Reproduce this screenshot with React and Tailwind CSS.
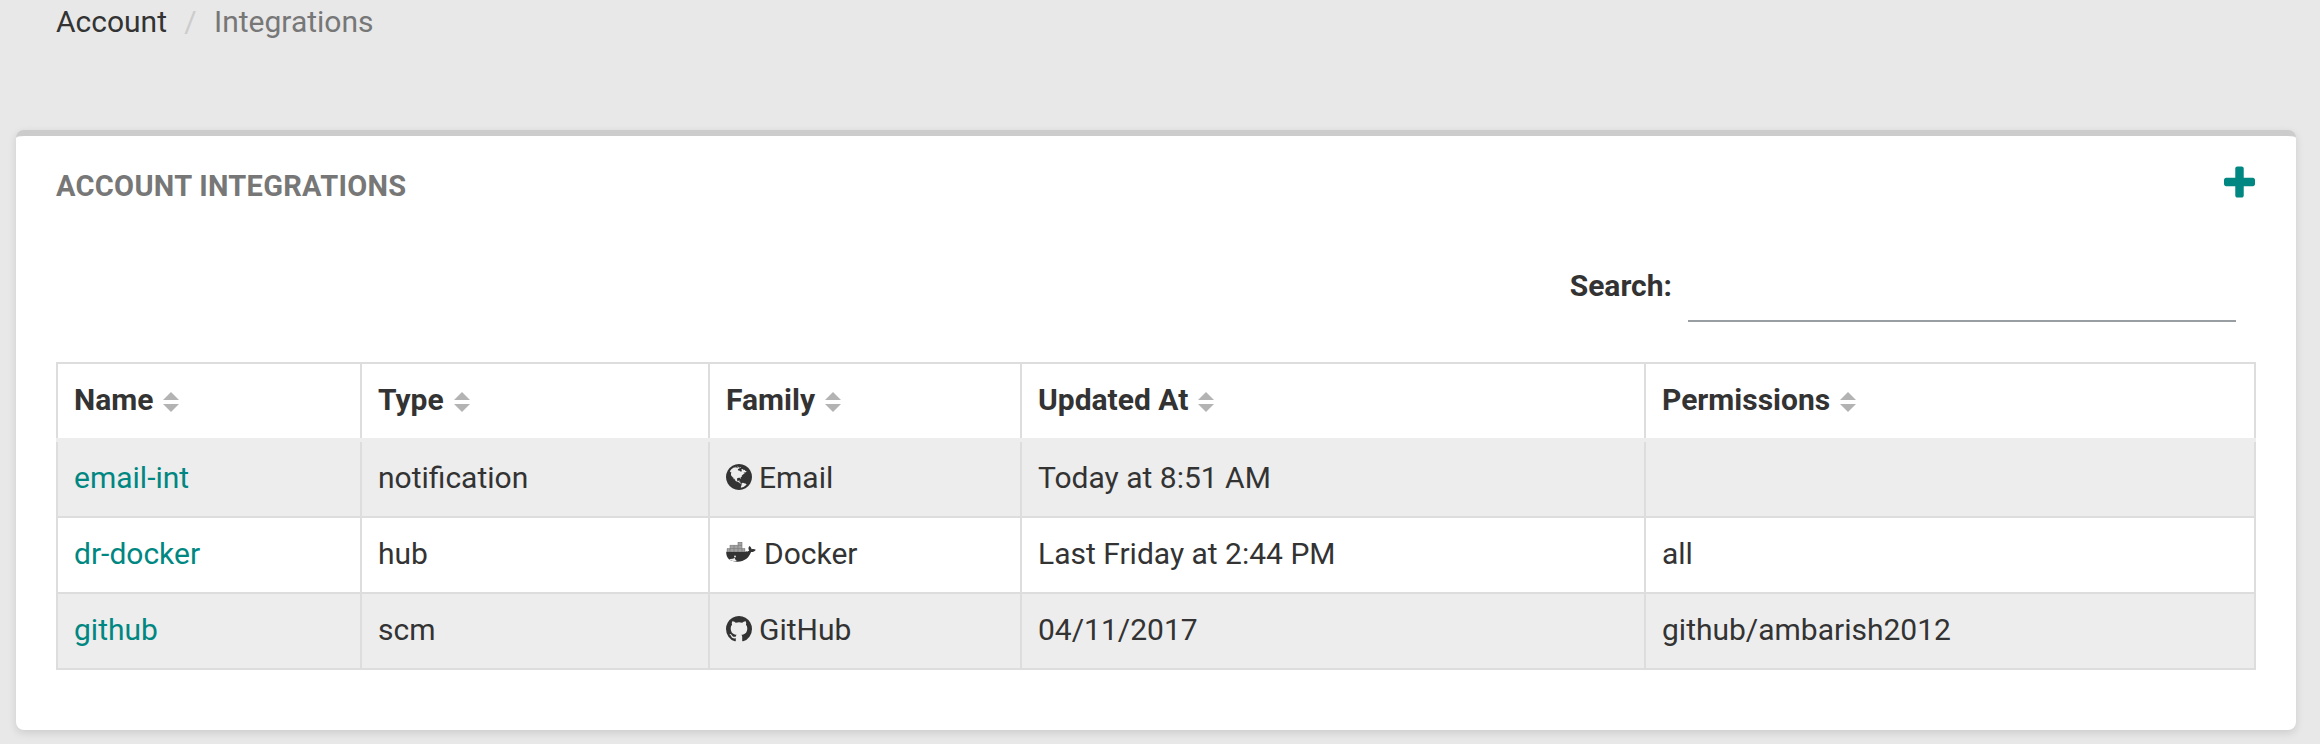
const columns = [
  { key: "name", label: "Name", width: "w-[304px]" },
  { key: "type", label: "Type", width: "w-[348px]" },
  { key: "family", label: "Family", width: "w-[312px]" },
  { key: "updated", label: "Updated At", width: "w-[624px]" },
  { key: "permissions", label: "Permissions", width: "w-[612px] border-r-2" },
];

const rows = [
  { name: "email-int", type: "notification", family: "Email", icon: GlobeIcon, updated: "Today at 8:51 AM", permissions: "" },
  { name: "dr-docker", type: "hub", family: "Docker", icon: DockerIcon, updated: "Last Friday at 2:44 PM", permissions: "all" },
  { name: "github", type: "scm", family: "GitHub", icon: GithubIcon, updated: "04/11/2017", permissions: "github/ambarish2012" },
];

function PlusIcon() {
  return (
    <svg className="h-8 w-[31px]" viewBox="192 128 1408 1408" fill="currentColor" aria-hidden="true">
      <path d="M1600 736v192q0 40-28 68t-68 28h-416v416q0 40-28 68t-68 28h-192q-40 0-68-28t-28-68v-416h-416q-40 0-68-28t-28-68v-192q0-40 28-68t68-28h416v-416q0-40 28-68t68-28h192q40 0 68 28t28 68v416h416q40 0 68 28t28 68z" />
    </svg>
  );
}

function SortIcon() {
  return (
    <svg className="mt-[5px] h-5 w-4" viewBox="0 0 16 20" fill="#b3b3b3" aria-hidden="true">
      <path d="M8 0 16 8H0zM0 12h16l-8 8z" />
    </svg>
  );
}

function GlobeIcon() {
  return (
    <svg className="mr-[7px] mb-px h-[26px] w-[26px]" viewBox="128 128 1536 1536" fill="currentColor" aria-hidden="true">
      <path d="M896 128q209 0 385.5 103t279.5 279.5 103 385.5-103 385.5-279.5 279.5-385.5 103-385.5-103-279.5-279.5-103-385.5 103-385.5 279.5-279.5 385.5-103zm274 521q-2 1-9.5 9.5t-13.5 9.5q2 0 4.5-5t5-11 3.5-7q6-7 22-15 14-6 52-12 34-8 51 11-2-2 9.5-13t14.5-12q3-2 15-4.5t15-7.5l2-22q-12 1-17.5-7t-6.5-21q0 2-6 8 0-7-4.5-8t-11.5 1-9 1q-10-3-15-7.5t-8-16.5-4-15q-2-5-9.5-10.5t-9.5-10.5q-1-2-2.5-5.5t-3-6.5-4-5.500-5.500-2.500-7 5-7.500 10-4.500 5q-3-2-6-1.500t-4.500 1-4.500 3-5 3.500q-3 2-8.500 3t-8.500 2q15-5-1-11-10-4-16-3 9-4 7.500-12t-8.500-14h5q-1-4-8.500-8.500t-17.500-8.500-13-6q-8-5-34-9.500t-33-.5q-5 6-4.500 10.500t4 14 3.500 12.500q1 6-5.500 13t-6.500 12q0 7 14 15.500t10 21.500q-3 8-16 16t-16 12q-5 8-1.500 18.500t10.500 16.500q2 2 1.500 4t-3.500 4.500-5.500 4-6.500 3.500l-3 2q-11 5-20.500-6t-13.500-26q-7-25-16-30-23-8-29 1-5-13-41-26-25-9-58-4 6-1 0-15-7-15-19-12 3-6 4-17.500t1-13.500q3-13 12-23 1-1 7-8.500t9.500-13.500.5-6q35 4 50-11 5-5 11.500-17t10.500-17q9-6 14-5.500t14.500 5.500 14.500 5q14 1 15.500-11t-7.500-20q12 1 3-17-4-7-8-9-12-4-27 5-8 4 2 8-1-1-9.500 10.500t-16.500 17.500-16-5q-1-1-5.500-13.500t-9.500-13.500q-8 0-16 15 3-8-11-15t-24-8q19-12-8-27-7-4-20.500-5t-19.500 4q-5 7-5.500 11.500t5 8 10.500 5.500 11.500 4 8.500 3q14 10 8 14-2 1-8.500 3.500t-11.500 4.500-6 4q-3 4 0 14t-2 14q-5-5-9-17.500t-7-16.500q7 9-25 6l-10-1q-4 0-16 2t-20.500 1-13.500-8q-4-8 0-20 1-4 4-2-4-3-11-9.500t-10-8.500q-46 15-94 41 6 1 12-1 5-2 13-6.500t10-5.500q34-14 42-7l5-5q14 16 20 25-7-4-30-1-20 6-22 12 7 12 5 18-4-3-11.500-10t-14.500-11-15-5q-16 0-22 1-146 80-235 222 7 7 12 8 4 1 5 9t2.500 11 11.500-3q9 8 3 19 1-1 44 27 19 17 21 21 3 11-10 18-1-2-9-9t-9-4q-3 5 .5 18.500t10.500 12.500q-7 0-9.500 16t-2.500 35.500-1 23.500l2 1q-3 12 5.500 34.500t21.500 19.500q-13 3 20 43 6 8 8 9 3 2 12 7.500t15 10 10 10.500q4 5 10 22.500t14 23.500q-2 6 9.500 20t10.500 23q-1 0-2.500 1t-2.500 1q3 7 15.500 14t15.500 13q1 3 2 10t3 11 8 2q2-20-24-62-15-25-17-29-3-5-5.500-15.500t-4.500-14.500q2 0 6 1.500t8.500 3.500 7.500 4 2 3q-3 7 2 17.500t12 18.500 17 19 12 13q6 6 14 19.500t0 13.500q9 0 20 10.500t17 19.500q5 8 8 26t5 24q2 7 8.500 13.500t12.500 9.500l16 8 13 7q5 2 18.500 10.500t21.500 11.500q10 4 16 4t14.500-2.500 13.500-3.500q15-2 29 15t21 21q36 19 55 11-2 1 .5 7.500t8 15.500 9 14.500 5.500 8.500q5 6 18 15t18 15q6-4 7-9-3 8 7 20t18 10q14-3 14-32-31 15-49-18 0-1-2.500-5.500t-4-8.500-2.500-8.500 0-7.500 5-3q9 0 10-3.500t-2-12.500-4-13q-1-8-11-20t-12-15q-5 9-16 8t-16-9q0 1-1.500 5.500t-1.500 6.500q-13 0-15-1 1-3 2.500-17.500t3.500-22.500q1-4 5.500-12t7.500-14.500 4-12.500-4.500-9.500-17.500-2.500q-19 1-26 20-1 3-3 10.500t-5 11.500-9 7q-7 3-24 2t-24-5q-13-8-22.500-29t-9.500-37q0-10 2.500-26.500t3-25-5.500-24.500q3-2 9-9.500t10-10.500q2-1 4.500-1.500t4.500 0 4-1.500 3-6q-1-1-4-3-3-3-4-3 7 3 28.500-1.500t27.500 1.500q15 11 22-2 0-1-2.500-9.500t-.5-13.500q5 27 29 9 3 3 15.500 5t17.500 5q3 2 7 5.500t5.500 4.500 5-.5 8.500-6.500q10 14 12 24 11 40 19 44 7 3 11 2t4.500-9.500 0-14-1.500-12.500l-1-8v-18l-1-8q-15-3-18.500-12t1.500-18.500 15-18.500q1-1 8-3.500t15.500-6.500 12.500-8q21-19 15-35 7 0 11-9-1 0-5-3t-7.500-5-4.500-2q9-5 2-16 5-3 7.500-11t7.500-10q9 12 21 2 8-8 1-16 5-7 20.500-10.500t18.500-9.500q7 2 8-2t1-12 3-12q4-5 15-9t13-5l17-11q3-4 0-4 18 2 31-11 10-11-6-20 3-6-3-9.500t-15-5.500q3-1 11.500-.5t10.500-1.500q15-10-7-16-17-5-43 12zm-163 877q206-36 351-189-3-3-12.500-4.500t-12.500-3.500q-18-7-24-8 1-7-2.500-13t-8-9-12.500-8-11-7q-2-2-7-6t-7-5.500-7.500-4.500-8.500-2-10 1l-3 1q-3 1-5.500 2.500t-5.500 3-4 3 0 2.500q-21-17-36-22-5-1-11-5.500t-10.500-7-10-1.500-11.500 7q-5 5-6 15t-2 13q-7-5 0-17.500t2-18.500q-3-6-10.500-4.500t-12 4.500-11.500 8.500-9 6.500-8.500 5.500-8.500 7.500q-3 4-6 12t-5 11q-2-4-11.500-6.500t-9.500-5.500q2 10 4 35t5 38q7 31-12 48-27 25-29 40-4 22 12 26 0 7-8 20.500t-7 21.500q0 6 2 16z" />
    </svg>
  );
}

function DockerIcon() {
  return (
    <svg className="mr-2 mb-[3px] h-5 w-[30px]" viewBox="0 0 30 20" aria-hidden="true">
      <path fill="#a3a3a3" d="M12 0h4v3.200h-4zM4 3.200h12v3.300H4zM1 6.500h18v3.300H1z" />
      <path d="M4 3.200v6.600M8 3.200v6.600M12 0v9.800M16 0v9.800M1.200 6.500v3.300M18.800 6.500v3.300M12 .2h4M4 3.400h12M1 6.600h18" stroke="#777" strokeWidth=".6" fill="none" />
      <path
        fill="#333"
        d="M.2 9.800H19c1.800 0 3.300-.4 4.300-1.200-1.200-1.500-1.100-3.200.2-4.600 1.300.9 2 2.100 2.100 3.300 1.500-.4 3.100-.2 4.200.5-.8 1.500-2.500 2.300-4.700 2.300C22.800 16 18.500 19.700 11.500 19.700 4 19.700 0 16.400.2 9.800z"
      />
      <path fill="#eee" d="M3.200 16.900c2 .2 3.900-.1 5.600-1 .2 1.500 1.200 2.600 2.800 3.200-3.600.4-6.600-.2-8.400-2.200z" />
      <circle cx="9" cy="14.500" r="1" fill="#ddd" />
    </svg>
  );
}

function GithubIcon() {
  return (
    <svg className="mr-[7px] mb-px h-[26px] w-[26px]" viewBox="128 128 1536 1536" fill="currentColor" aria-hidden="true">
      <path d="M896 128q209 0 385.500 103t279.500 279.500 103 385.500q0 251-146.500 451.500t-378.500 277.500q-27 5-40-7t-13-30q0-3 .5-76.500t.5-134.500q0-97-52-142 57-6 102.500-18t94-39 81-66.500 53-105 20.500-150.500q0-119-79-206 37-91-8-204-28-9-81 11t-92 44l-38 24q-93-26-192-26t-192 26q-16-11-42.500-27t-83.500-38.500-85-13.500q-45 113-8 204-79 87-79 206 0 85 20.500 150t52.500 105 80.500 67 94 39 102.500 18q-39 36-49 103-21 10-45 15t-57 5-65.500-21.500-55.500-62.500q-19-32-48.500-52t-49.500-24l-20-3q-21 0-29 4.500t-5 11.500 9 14 13 12l7 5q22 10 43.500 38t31.500 51l10 23q13 38 44 61.500t67 30 69.500 7 55.500-3.500l23-4q0 38 .5 88.500t.5 54.500q0 18-13 30t-40 7q-232-77-378.500-277.500t-146.500-451.500q0-209 103-385.500t279.500-279.500 385.500-103z" />
    </svg>
  );
}

export default function App() {
  return (
    <div className="h-[744px] w-[2320px] overflow-hidden bg-[#e8e8e8] font-['Roboto',sans-serif] text-[30px] leading-10 text-[#333]">
      <nav className="flex h-[130px] items-start pl-14">
        <a className="mt-[2px]">Account</a>
        <span className="mt-[2px] w-[47px] text-center text-[#ccc]">/</span>
        <span className="mt-[2px] text-[#777]">Integrations</span>
      </nav>

      <main className="mr-6 ml-4 h-[600px] rounded-lg border-t-[6px] border-[#ccc] bg-white px-10 shadow-[0_3px_8px_rgba(0,0,0,0.12)]">
        <header className="flex h-[110px] items-start justify-between">
          <h1 className="mt-[30px] text-[29px] font-bold tracking-[0.3px] text-[#777]">ACCOUNT INTEGRATIONS</h1>
          <button className="mt-[30px] mr-px text-[#008781]" aria-label="Add integration">
            <PlusIcon />
          </button>
        </header>

        <div className="flex h-[116px] items-start justify-end pr-5">
          <label htmlFor="search" className="mr-4 mt-5 font-bold">Search:</label>
          <input id="search" className="h-[76px] w-[548px] border-b-2 border-[#999ea2] bg-transparent outline-none" />
        </div>

        <div role="table" className="w-[2200px]">
          <div role="row" className="flex h-[76px] border-t-2 border-[#ddd]">
            {columns.map((c) => (
              <div key={c.key} role="columnheader" className={`${c.width} flex items-center border-l-2 border-[#ddd] pb-[3px] pl-4 font-bold`}>
                <span className="mr-2.5">{c.label}</span>
                <SortIcon />
              </div>
            ))}
          </div>
          <div className="h-1 bg-[#ededed]" />
          {rows.map((r) => (
            <div key={r.name} role="row" className="flex h-[76px] border-b-2 border-[#ddd] even:bg-white odd:bg-[#ededed]">
              {columns.map((c) => (
                <div key={c.key} role="cell" className={`${c.width} flex items-center border-l-2 border-[#ddd] pb-[3px] pl-4`}>
                  {c.key === "family" && <r.icon />}
                  <span className={c.key === "name" ? "text-[#008781]" : ""}>{r[c.key]}</span>
                </div>
              ))}
            </div>
          ))}
        </div>
      </main>
    </div>
  );
}
